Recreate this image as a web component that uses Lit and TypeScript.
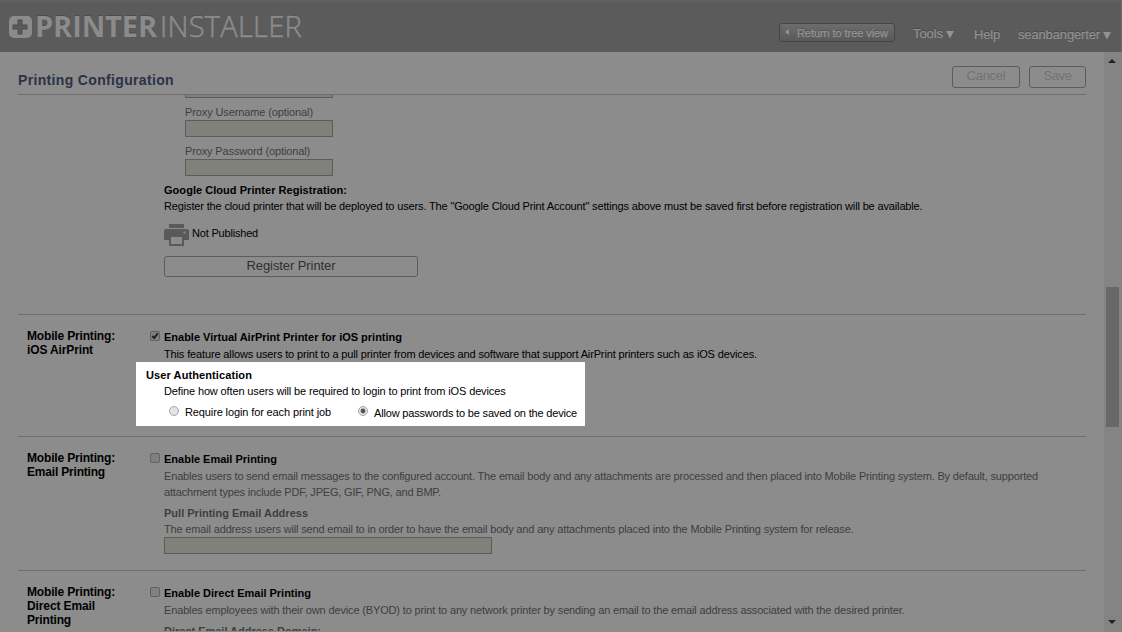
import { LitElement, html, css, svg } from "lit";
import { customElement, property } from "lit/decorators.js";

/* One line of text, tracked so that it fills the given measure. */
@customElement("text-line")
class TextLine extends LitElement {
  @property({ type: Number }) measure = 0;
  @property() text = "";
  static styles = css`
    :host { display: block; height: 14px; line-height: 14px; white-space: pre; }
    span { display: inline-block; }
  `;
  render() { return html`<span>${this.text}</span>`; }
  updated() {
    const s = this.renderRoot.querySelector("span") as HTMLElement;
    s.style.letterSpacing = "0";
    const natural = s.getBoundingClientRect().width;
    if (this.measure) s.style.letterSpacing = `${(this.measure - natural) / this.text.length}px`;
  }
}

const line = (text: string, measure: number, cls = "") =>
  html`<text-line class=${cls} .text=${text} .measure=${measure}></text-line>`;

const check = (on = false) => html`<svg class="check" width="10" height="10" viewBox="0 0 10 10">
  <rect x=".5" y=".5" width="9" height="9" rx="1.5" fill="#808080" stroke="#616161"/>
  ${on ? svg`<path d="M2.3 5 4.2 7 7.8 2.4" fill="none" stroke="#202020" stroke-width="2"/>` : ""}
</svg>`;

const radio = (on = false) => html`<svg class="radio" width="10" height="10" viewBox="0 0 10 10">
  <circle cx="5" cy="5" r="4.5" fill="#e3e3e3" stroke="#a5a5a5"/>
  ${on ? svg`<circle cx="5" cy="5" r="2.4" fill="#555"/>` : ""}
</svg>`;

@customElement("app-root")
class AppRoot extends LitElement {
  static styles = css`
    :host { display: block; width: 1122px; height: 632px; overflow: hidden; background: #8c8c8c;
      font: 11px/14px "Liberation Sans", Arial, sans-serif; color: #000; }
    * { box-sizing: border-box; }
    svg { display: block; flex: none; }
    header { height: 52px; display: flex; background: linear-gradient(#626262 0 1px, #5b5b5b 3px); border-right: 1px solid #6b6b6b; }
    header > * { flex: none; }
    .logo { margin: 16px 0 0 9px; }
    .brand { display: flex; margin: 10px 0 0 3px; font: 29px/32px "Open Sans", sans-serif; color: #8b8b8b; width: 270px; text-shadow: 0 -1px 0 #4c4c4c; }
    .brand text-line { height: 32px; line-height: 32px; flex: none; }
    .brand .bold { font-weight: 700; width: 125px; }
    .brand .light { font-weight: 300; width: 144px; -webkit-text-stroke: .6px #8b8b8b; }
    .back { margin: 23px 0 0 474px; width: 116px; height: 19px; border: 1px solid #454545; border-radius: 3px;
      background: linear-gradient(#6c6c6c, #595959); display: flex; padding: 2px 0 0 5px; color: #939393; text-shadow: 0 -1px 0 #484848; -webkit-text-stroke: .3px #939393; }
    .back svg { margin: 3px 8px 0 0; }
    .nav { color: #929292; font-size: 13px; text-shadow: 0 -1px 0 #484848; display: flex; -webkit-text-stroke: .2px #929292; }
    .nav svg { margin: 4px 0 0 3px; }
    .tools { margin: 27px 0 0 18px; width: 43px; }
    .help { margin: 28px 0 0 18px; width: 27px; }
    .user { margin: 28px 0 0 17px; }
    .body { display: flex; height: 580px; }
    .page { width: 1104px; padding-left: 18px; height: 579px; overflow: hidden; }
    .title { width: 1068px; height: 43px; border-bottom: 1px solid #6f6f6f; display: flex; }
    .title h1 { margin: 21px 0 0; font-size: 14px; font-weight: 700; color: #2b3246; width: 934px; }
    .btn { border: 1px solid #5c5c5c; border-radius: 3px; display: flex; justify-content: center; height: 22px; margin-top: 14px; font-size: 13px; color: #727272; padding-top: 2px; }
    .cancel { width: 68px; } .save { width: 57px; margin-left: 9px; }
    .form { padding-left: 146px; height: 219px; }
    .indent { padding-left: 21px; }
    .field { width: 148px; height: 17px; border: 1px solid #5c5c5a; background: #80817a; margin-top: 1px; }
    .cut { height: 3px; border-top: 0; margin: 0; }
    .grey { color: #3e3e3e; }
    .b { font-weight: 700; }
    .t2 { margin-top: 2px; } .t3 { margin-top: 3px; } .t7 { margin-top: 7px; }
    .status { display: flex; margin-top: 11px; height: 22px; gap: 3px; }
    .status text-line { margin-top: 2px; }
    .register { width: 254px; height: 21px; margin-top: 10px; color: #303030; }
    .section { width: 1068px; border-top: 1px solid #6f6f6f; display: flex; }
    .s1 { height: 122px; } .s2 { height: 134px; } .s3 { height: 61px; }
    .name { padding: 14px 0 0 9px; width: 132px; font-size: 12px; font-weight: 700; flex: none; }
    .main { padding-top: 15px; width: 920px; }
    .row { display: flex; }
    .check { margin: 1px 4px 0 0; }
    .text { padding-left: 14px; }
    .spot { margin: 1px 0 0 -14px; width: 449px; height: 64px; background: #fff; padding: 6px 0 0 10px; }
    .spot .in { padding-left: 18px; }
    .choices { display: flex; padding: 7px 0 0 23px; }
    .choices .opt { display: flex; gap: 6px; width: 189px; flex: none; }
    .radio { margin-top: 1px; }
    .opt .o2 { margin-top: 1px; }
    .wide { width: 328px; margin-top: 1px; }
    .bar { width: 18px; background: #848484; display: flex; flex-direction: column; align-items: center; padding: 7px 2px 6px 0; }
    .thumb { width: 13px; height: 140px; background: #686868; margin: 224px 0 193px; flex: none; }
  `;
  render() {
    const down = html`<svg width="8" height="8" viewBox="0 0 8 8"><path d="M0 0h8L4 7.5z" fill="#929292"/></svg>`;
    return html`
      <header>
        <svg class="logo" width="23" height="22" viewBox="0 0 23 22">
          <rect width="23" height="22" rx="5" fill="#8b8b8b"/>
          <path d="M8.5 3.5h5v5h5v5h-5v5h-5v-5h-5v-5h5z" fill="#505050"/>
          <path d="M10 5h2v5h5v2h-5v5h-2v-5H5v-2h5z" fill="#5b5b5b"/>
        </svg>
        <div class="brand">${line("PRINTER", 122, "bold")}${line("INSTALLER", 142, "light")}</div>
        <div class="back">
          <svg width="4" height="6" viewBox="0 0 4 6"><path d="M4 0v6L0 3z" fill="#929292"/></svg>
          ${line("Return to tree view", 91)}
        </div>
        <div class="nav tools">${line("Tools", 30)}${down}</div>
        <div class="nav help">${line("Help", 26)}</div>
        <div class="nav user">${line("seanbangerter", 82)}${down}</div>
      </header>
      <div class="body">
        <div class="page">
          <div class="title">
            <h1>${line("Printing Configuration", 156)}</h1>
            <div class="btn cancel">${line("Cancel", 39)}</div>
            <div class="btn save">${line("Save", 28)}</div>
          </div>
          <div class="form">
            <div class="indent grey">
              <div class="field cut"></div>
              ${line("Proxy Username (optional)", 128, "t7")}
              <div class="field"></div>
              ${line("Proxy Password (optional)", 125, "t7")}
              <div class="field"></div>
            </div>
            ${line("Google Cloud Printer Registration:", 183, "b t7")}
            ${line('Register the cloud printer that will be deployed to users. The "Google Cloud Print Account" settings above must be saved first before registration will be available.', 758.5, "t2")}
            <div class="status">
              <svg width="25" height="22" viewBox="0 0 25 22">
                <path fill="#5a5a5a" fill-rule="evenodd" d="M5 0h15v4H5zM2 5h21q2 0 2 2v9h-5v6H5v-6H0V7q0-2 2-2zM7 13v7h11v-7zM19.500 7.500v2h2v-2z"/>
              </svg>
              ${line("Not Published", 66)}
            </div>
            <div class="btn register">${line("Register Printer", 89)}</div>
          </div>
          <div class="section s1">
            <div class="name">${line("Mobile Printing:", 88)}${line("iOS AirPrint", 66)}</div>
            <div class="main">
              <div class="row">${check(true)}${line("Enable Virtual AirPrint Printer for iOS printing", 238, "b")}</div>
              <div class="text">${line("This feature allows users to print to a pull printer from devices and software that support AirPrint printers such as iOS devices.", 593, "t3")}</div>
              <div class="spot">
                ${line("User Authentication", 106, "b")}
                <div class="in">${line("Define how often users will be required to login to print from iOS devices", 341.5, "t2")}</div>
                <div class="choices">
                  <div class="opt">${radio()}${line("Require login for each print job", 146, "o1")}</div>
                  <div class="opt">${radio(true)}${line("Allow passwords to be saved on the device", 203, "o2")}</div>
                </div>
              </div>
            </div>
          </div>
          <div class="section s2">
            <div class="name">${line("Mobile Printing:", 88)}${line("Email Printing", 78)}</div>
            <div class="main">
              <div class="row">${check()}${line("Enable Email Printing", 113, "b")}</div>
              <div class="text grey">
                ${line("Enables users to send email messages to the configured account. The email body and any attachments are processed and then placed into Mobile Printing system. By default, supported", 874, "t3")}
                ${line("attachment types include PDF, JPEG, GIF, PNG, and BMP.", 277, "t2")}
                ${line("Pull Printing Email Address", 144, "b t7")}
                ${line("The email address users will send email to in order to have the email body and any attachments placed into the Mobile Printing system for release.", 689.5, "t2")}
                <div class="field wide"></div>
              </div>
            </div>
          </div>
          <div class="section s3">
            <div class="name">${line("Mobile Printing:", 88)}${line("Direct Email", 68)}${line("Printing", 44)}</div>
            <div class="main">
              <div class="row">${check()}${line("Enable Direct Email Printing", 147, "b")}</div>
              <div class="text grey">
                ${line("Enables employees with their own device (BYOD) to print to any network printer by sending an email to the email address associated with the desired printer.", 740.5, "t3")}
                ${line("Direct Email Address Domain:", 157, "b t7")}
              </div>
            </div>
          </div>
        </div>
        <div class="bar">
          <svg width="8" height="4" viewBox="0 0 8 4"><path d="M0 4 4 0l4 4z" fill="#222"/></svg>
          <div class="thumb"></div>
          <svg width="8" height="4" viewBox="0 0 8 4"><path d="M0 0h8L4 4z" fill="#222"/></svg>
        </div>
      </div>`;
  }
}
